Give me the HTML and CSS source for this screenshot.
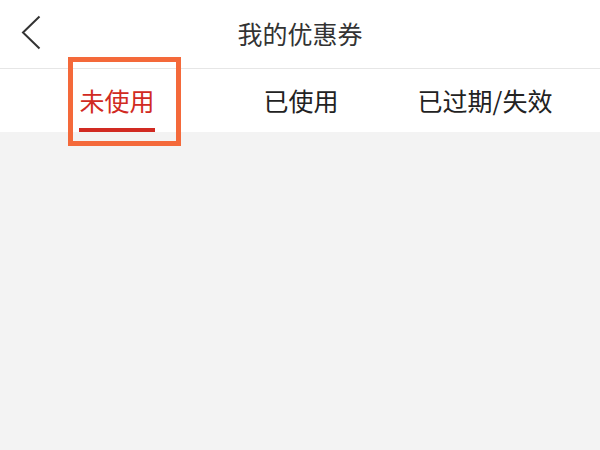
FILE: index.html
```html
<!DOCTYPE html>
<html lang="zh">
<head>
<meta charset="utf-8">
<link rel="stylesheet" href="styles.css">
</head>
<body>
<div class="page">
  <header class="topbar">
    <span class="back">
      <svg width="20" height="36" viewBox="0 0 20 36"><path d="M18.5 1.5 L2 17.5 L18.5 33.5" fill="none" stroke="#333" stroke-width="2"/></svg>
    </span>
    <h1 class="title">我的优惠券</h1>
  </header>
  <nav class="tabs">
    <div class="tab active"><span class="label">未使用</span></div>
    <div class="tab"><span class="label">已使用</span></div>
    <div class="tab"><span class="label">已过期/失效</span></div>
  </nav>
  <main class="content"></main>
  <div class="highlight"></div>
</div>
</body>
</html>
```
FILE: styles.css
```css
* { box-sizing: border-box; margin: 0; padding: 0; }
html, body { width: 600px; height: 450px; overflow: hidden; }
body {
  font-family: "Noto Sans CJK SC", "Noto Sans", sans-serif;
  background: #f3f3f3;
}
.page { position: relative; width: 600px; height: 450px; display: flex; flex-direction: column; }
.topbar {
  height: 69px;
  background: #fff;
  border-bottom: 1px solid #e6e6e6;
  display: flex;
  align-items: center;
  justify-content: center;
  position: relative;
}
.back {
  position: absolute;
  left: 21px;
  top: 15px;
  width: 20px;
  height: 36px;
  display: block;
}
.back svg { display: block; }
.title {
  font-size: 25px;
  font-weight: 400;
  color: #333;
  line-height: 1;
  margin-top: -1px;
}
.tabs {
  height: 63px;
  background: #fff;
  display: grid;
  grid-template-columns: repeat(3, 1fr);
  padding: 0 23px 0 25px;
}
.tab {
  display: flex;
  justify-content: center;
  align-items: stretch;
}
.label {
  font-size: 25px;
  color: #222;
  line-height: 1;
  display: flex;
  align-items: center;
  padding-top: 3px;
  border-bottom: 4px solid transparent;
}
.tab.active .label {
  color: #d12a22;
  border-bottom-color: #d12a22;
}
.content { flex: 1; background: #f3f3f3; }
.highlight {
  position: absolute;
  left: 68px;
  top: 57px;
  width: 113px;
  height: 89px;
  border: 5px solid #f4693a;
}
```
